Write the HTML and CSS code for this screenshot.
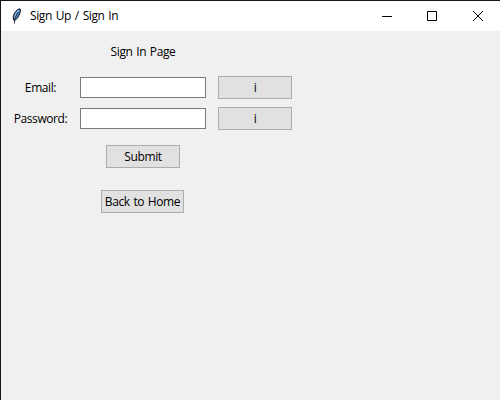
FILE: index.html
```html
<!DOCTYPE html>
<html lang="en">
<head>
<meta charset="utf-8">
<title>Sign Up / Sign In</title>
<link rel="stylesheet" href="styles.css">
</head>
<body>
<div class="window">
  <header class="titlebar">
    <svg class="feather" width="16" height="16" viewBox="0 0 16 16">
      <path d="M12 .8 9.5 1.5 6.5 5 5.2 9 5.5 12 7 12.5 9.5 10 11.7 6 12.5 2Z" fill="#5588c8" stroke="#111820" stroke-width="1"/>
      <path d="M10.5 2.5 8 6 6.8 10" fill="none" stroke="#a9cdf2" stroke-width="1.2"/>
      <path d="M10 4 7 10 6.3 15.5" fill="none" stroke="#111820" stroke-width=".9"/>
    </svg>
    <span class="caption">Sign Up / Sign In</span>
    <div class="controls">
      <svg width="45" height="29" viewBox="0 0 45 29"><path d="M17 14.5h10" class="line"/></svg>
      <svg width="45" height="29" viewBox="0 0 45 29"><path d="M17.5 9.5h9v9h-9z" class="line"/></svg>
      <svg width="45" height="29" viewBox="0 0 45 29"><path d="M18 9l10 10M28 9l-10 10" class="line"/></svg>
    </div>
  </header>
  <form class="form">
    <h1 class="heading">Sign In Page</h1>
    <label for="email">Email:</label>
    <input id="email" type="text">
    <button type="button">i</button>
    <label for="password">Password:</label>
    <input id="password" type="password">
    <button type="button">i</button>
    <button class="submit" type="button">Submit</button>
    <button class="back" type="button">Back to Home</button>
  </form>
</div>
</body>
</html>
```

FILE: styles.css
```css
* { box-sizing: border-box; }

body {
  margin: 0;
  font: 12px/16px "Open Sans", "Noto Sans", sans-serif;
  color: #000;
}

.window {
  height: 400px;
  overflow: hidden;
  background: #f0f0f0;
  border-top: 1px solid #17151a;
  border-left: 1px solid #17151a;
}

.titlebar {
  display: flex;
  align-items: center;
  height: 30px;
  padding-left: 7px;
  background: #fff;
}

.feather { display: block; }

.caption {
  margin-left: 6px;
  letter-spacing: -.4px;
  word-spacing: 1.1px;
  white-space: nowrap;
}

.controls { display: flex; margin-left: auto; }
.line { fill: none; stroke: #000; stroke-width: 1; }

.form {
  display: grid;
  grid-template-columns: 79px 126px 86px;
  grid-template-rows: 41px 31px 31px 45px 45px;
  align-items: center;
  letter-spacing: -.4px;
  word-spacing: 1px;
}

.heading {
  grid-column: 1 / -1;
  margin: 0;
  padding-left: 79px;
  width: 205px;
  font-size: 12px;
  font-weight: 400;
  text-align: center;
}

label { text-align: center; white-space: nowrap; }

input {
  width: 126px;
  height: 21px;
  padding: 2px;
  border: 1px solid #7a7a7a;
  border-radius: 0;
  background: #fff;
}

button {
  width: 74px;
  height: 23px;
  padding: 0;
  border: 1px solid #adadad;
  border-radius: 0;
  background: #e1e1e1;
  color: #000;
  font: inherit;
  letter-spacing: inherit;
  word-spacing: inherit;
  white-space: nowrap;
  justify-self: end;
}

.submit,
.back {
  grid-column: 2;
  justify-self: start;
  margin-left: 26px;
}

.back { width: 83px; margin-left: 21px; }
```
